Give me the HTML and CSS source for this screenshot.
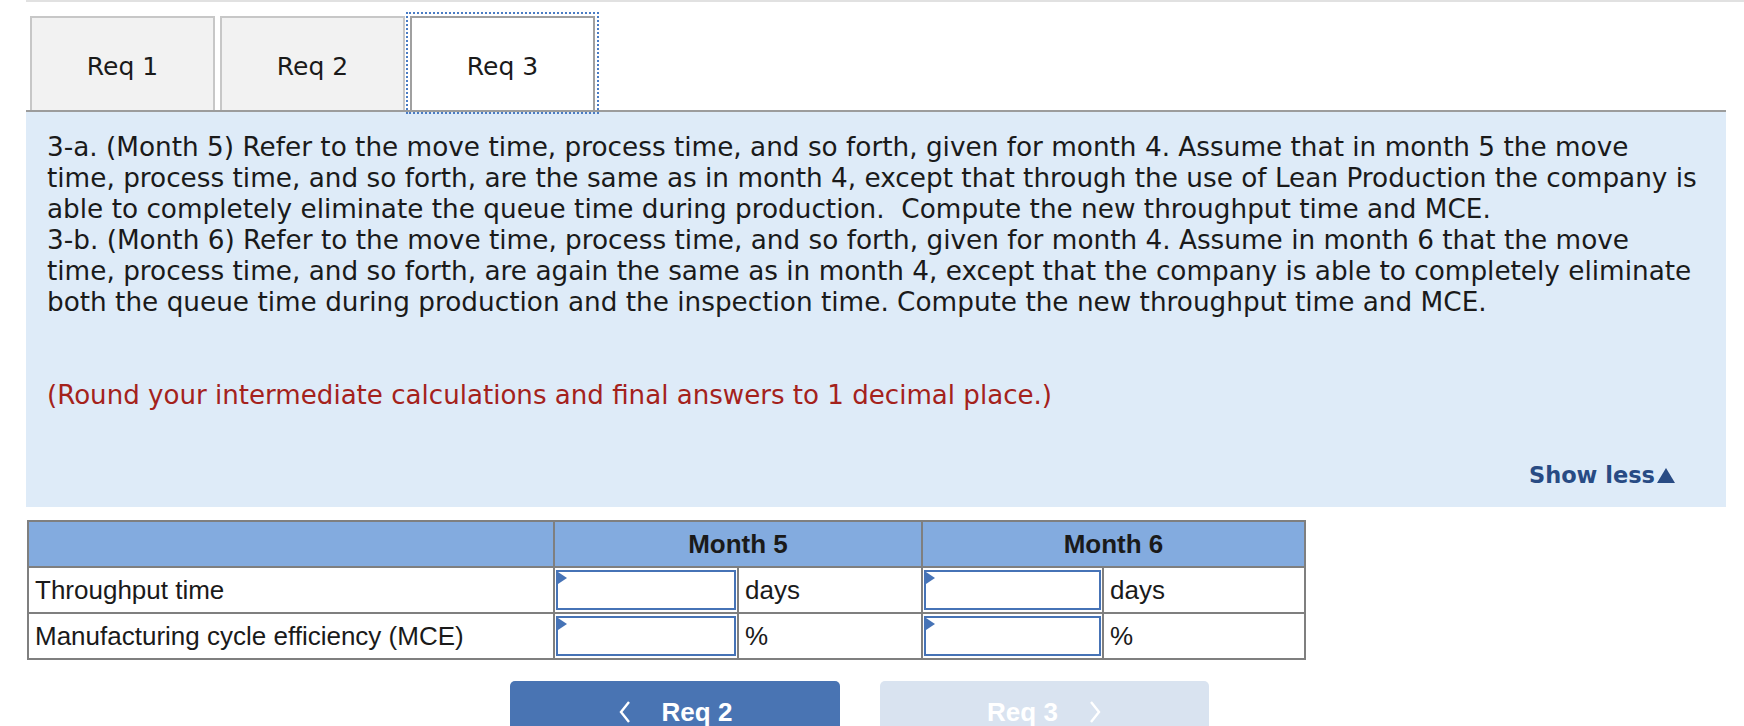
FILE: index.html
```html
<!DOCTYPE html>
<html>
<head>
<meta charset="utf-8">
<link rel="stylesheet" href="styles.css">
</head>
<body>
<div class="page">
  <div class="inner">
    <div class="tabs">
      <div class="tab">Req 1</div>
      <div class="tab">Req 2</div>
      <div class="tab active">Req 3</div>
    </div>
    <div class="panel">
      <p class="question">3-a. (Month 5) Refer to the move time, process time, and so forth, given for month 4. Assume that in month 5 the move<br>time, process time, and so forth, are the same as in month 4, except that through the use of Lean Production the company is<br>able to completely eliminate the queue time during production.&nbsp; Compute the new throughput time and MCE.<br>3-b. (Month 6) Refer to the move time, process time, and so forth, given for month 4. Assume in month 6 that the move<br>time, process time, and so forth, are again the same as in month 4, except that the company is able to completely eliminate<br>both the queue time during production and the inspection time. Compute the new throughput time and MCE.</p>
      <p class="note">(Round your intermediate calculations and final answers to 1 decimal place.)</p>
      <div class="showless">Show less<svg class="tri" width="18" height="15" viewBox="0 0 18 15"><polygon points="9,0 18,15 0,15" fill="#284b84"/></svg></div>
    </div>
    <table class="grid">
      <colgroup>
        <col class="c-label">
        <col class="c-in5">
        <col class="c-u5">
        <col class="c-in6">
        <col class="c-u6">
      </colgroup>
      <thead>
        <tr>
          <th></th>
          <th colspan="2">Month 5</th>
          <th colspan="2">Month 6</th>
        </tr>
      </thead>
      <tbody>
        <tr>
          <td class="label">Throughput time</td>
          <td class="incell"><div class="inp"></div></td>
          <td class="unit">days</td>
          <td class="incell"><div class="inp"></div></td>
          <td class="unit">days</td>
        </tr>
        <tr>
          <td class="label">Manufacturing cycle efficiency (MCE)</td>
          <td class="incell"><div class="inp"></div></td>
          <td class="unit">%</td>
          <td class="incell"><div class="inp"></div></td>
          <td class="unit">%</td>
        </tr>
      </tbody>
    </table>
    <div class="nav">
      <div class="btn prev">
        <svg class="chev" width="14" height="24" viewBox="0 0 14 24"><polyline points="11,2 3,12 11,22" fill="none" stroke="#fff" stroke-width="2.4"/></svg>
        <span>Req 2</span>
      </div>
      <div class="btn next">
        <span>Req 3</span>
        <svg class="chev" width="14" height="24" viewBox="0 0 14 24"><polyline points="3,2 11,12 3,22" fill="none" stroke="#fff" stroke-width="2.4"/></svg>
      </div>
    </div>
  </div>
</div>
</body>
</html>
```

FILE: styles.css
```css
html, body {
  margin: 0;
  padding: 0;
  overflow: hidden;
  background: #fff;
}
body {
  font-family: "DejaVu Sans", Verdana, sans-serif;
  color: #1a1a1a;
}
.page {
  margin-left: 26px;
  border-top: 2px solid #e1e1e1;
}
.inner {
  width: 1700px;
}
.tabs {
  display: flex;
  gap: 5px;
  padding: 14px 0 0 4px;
  border-bottom: 2px solid #9c9c9c;
}
.tab {
  width: 185px;
  height: 94px;
  box-sizing: border-box;
  border: 2px solid #c7c7c7;
  border-bottom: none;
  background: #f2f2f2;
  display: flex;
  align-items: center;
  justify-content: center;
  padding-top: 4px;
  font-size: 25px;
  color: #1a1a1a;
}
.tab.active {
  background: #fff;
  border-color: #a0a0a0;
  outline: 2px dotted #4a7cc4;
  outline-offset: 2px;
}
.panel {
  background: #deebf8;
  height: 395px;
  box-sizing: border-box;
  padding: 20px 51px 0 21px;
}
.question {
  margin: 0;
  font-size: 26.3px;
  line-height: 31px;
  white-space: nowrap;
  color: #1a1a1a;
}
.note {
  margin: 62px 0 0 0;
  font-size: 26.1px;
  line-height: 31px;
  color: #a4221c;
  white-space: nowrap;
}
.showless {
  margin-top: 49px;
  display: flex;
  justify-content: flex-end;
  align-items: center;
  gap: 2px;
  font-weight: bold;
  font-size: 22.5px;
  line-height: 31px;
  color: #284b84;
}
.tri {
  display: block;
  margin-top: -1px;
}
.grid {
  margin: 13px 0 0 1px;
  width: 1277px;
  border-collapse: collapse;
  table-layout: fixed;
  font-family: "Liberation Sans", Arial, sans-serif;
  font-size: 26px;
  color: #1a1a1a;
}
.c-label { width: 526px; }
.c-in5 { width: 184px; }
.c-u5 { width: 184px; }
.c-in6 { width: 181px; }
.c-u6 { width: 202px; }
.grid th, .grid td {
  border: 2px solid #7f7f7f;
  padding: 0;
}
.grid th {
  background: #83abdf;
  height: 44px;
  font-weight: bold;
  text-align: center;
}
.grid td {
  height: 42px;
  line-height: 30px;
}
.grid td.label, .grid td.unit {
  padding-left: 6px;
}
.grid td.incell {
  padding: 1px;
}
.inp {
  position: relative;
  height: 40px;
  box-sizing: border-box;
  border: 2.5px solid #4673b6;
  background: #fff;
}
.inp::before {
  content: "";
  position: absolute;
  left: 0;
  top: 0;
  border-top: 6px solid transparent;
  border-bottom: 6px solid transparent;
  border-left: 9px solid #4673b6;
}
.nav {
  display: flex;
  gap: 40px;
  padding-left: 484px;
  margin-top: 21px;
}
.btn {
  width: 330px;
  height: 62px;
  border-radius: 5px 5px 0 0;
  display: flex;
  align-items: center;
  justify-content: center;
  gap: 30px;
  font-family: "Liberation Sans", Arial, sans-serif;
  font-weight: bold;
  font-size: 26px;
  color: #fff;
}
.prev {
  background: #4974b3;
}
.next {
  background: #d9e3f0;
  width: 329px;
}
.chev {
  display: block;
}
```
